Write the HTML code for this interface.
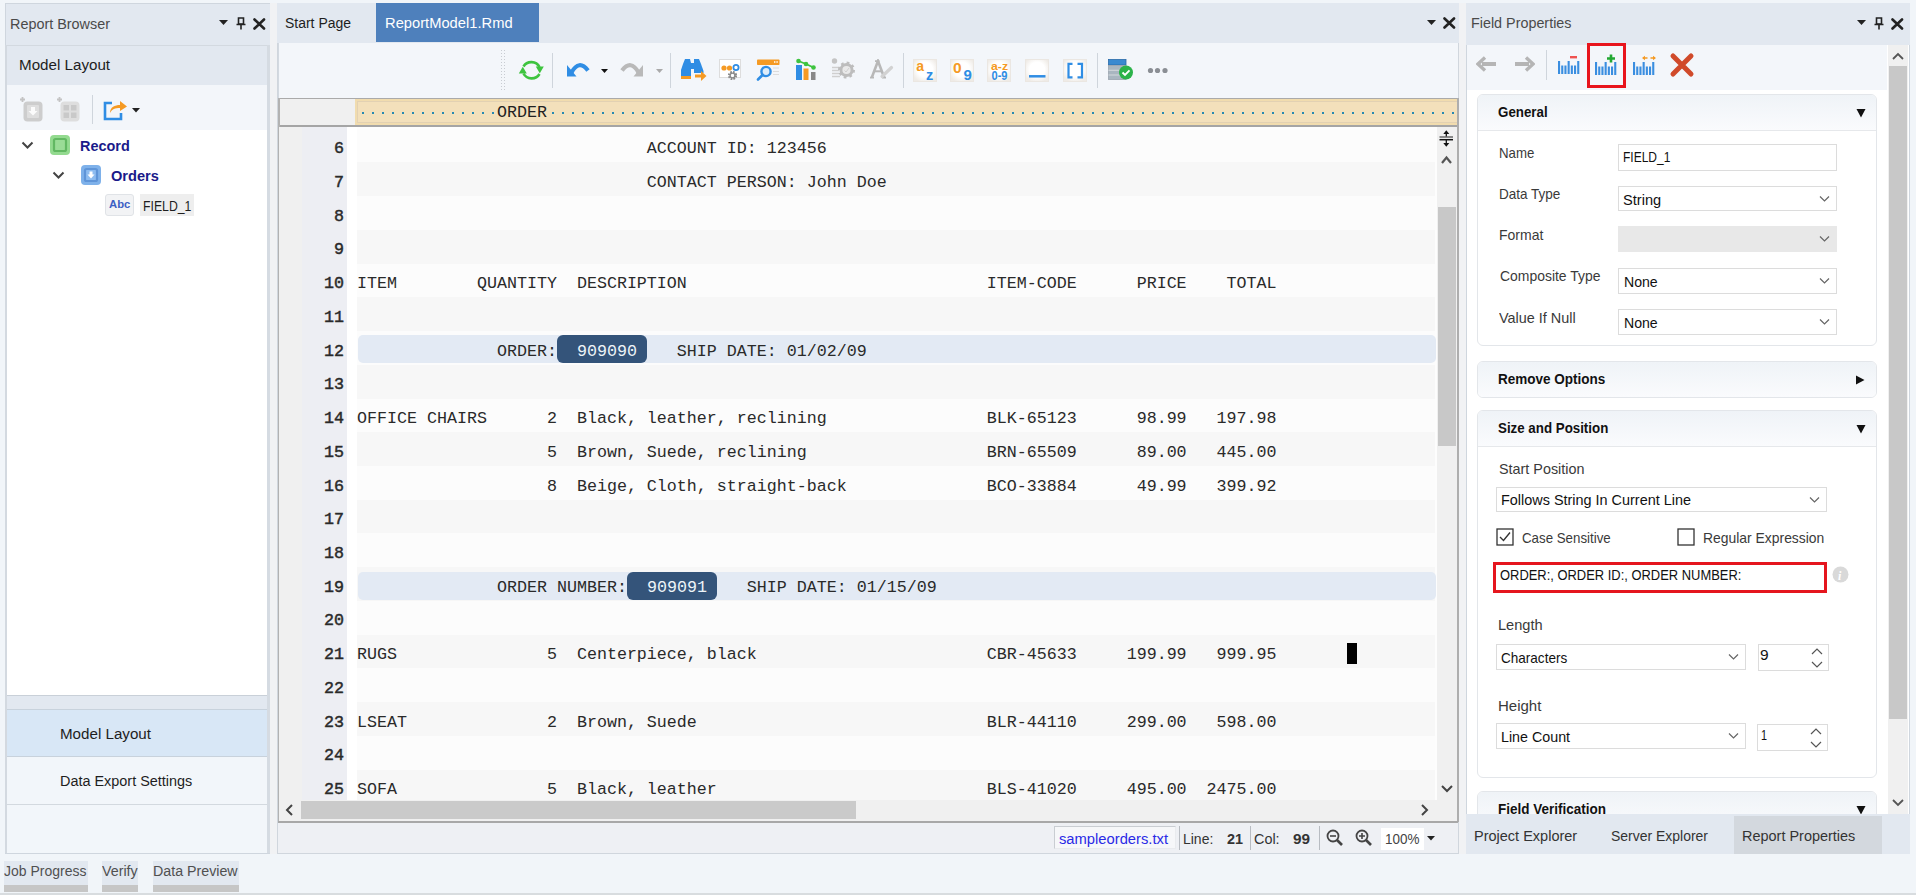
<!DOCTYPE html>
<html><head><meta charset="utf-8"><style>
*{box-sizing:border-box;margin:0;padding:0}
html,body{width:1916px;height:895px;overflow:hidden;background:#f1f5f9;font-family:"Liberation Sans",sans-serif;color:#222}
.a{position:absolute}
.t{position:absolute;white-space:pre;line-height:1}
.m{position:absolute;white-space:pre;line-height:1;font-family:"Liberation Mono",monospace;font-size:16.67px;color:#2a2a2a}
</style></head><body>
<div class="a" style="left:5px;top:3px;width:266px;height:851px;background:#e2e8f0;border:1px solid #cfd6de"></div>
<div class="t" style="left:9.70px;top:16.72px;font-size:14.5px;color:#4a4a4a;transform:scaleX(0.9920);transform-origin:0 0;">Report Browser</div>
<svg class="a" style="left:219px;top:20px;" width="10" height="7" viewBox="0 0 10 7"><path d="M0 0H9L4.5 5Z" fill="#222"/></svg>
<svg class="a" style="left:236px;top:17px;" width="10" height="13" viewBox="0 0 10 13"><path d="M2.5 1H7.5V7H2.5Z" fill="none" stroke="#222" stroke-width="1.6"/><path d="M0.5 7.5H9.5M5 7.5V12.5" stroke="#222" stroke-width="1.6"/></svg>
<svg class="a" style="left:253px;top:18px;" width="13" height="12" viewBox="0 0 13 12"><path d="M1.5 1.5L11 10.5M11 1.5L1.5 10.5" stroke="#222" stroke-width="2.6" stroke-linecap="round"/></svg>
<div class="a" style="left:7px;top:45px;width:262px;height:40px;background:#e2e8f0;border-top:1px solid #d3d9e0"></div>
<div class="t" style="left:18.50px;top:57.38px;font-size:15.5px;color:#1e1e1e;transform:scaleX(0.9788);transform-origin:0 0;">Model Layout</div>
<div class="a" style="left:7px;top:85px;width:260px;height:45px;background:#f3f6fa"></div>
<svg class="a" style="left:19px;top:96px;" width="28" height="28" viewBox="0 0 28 28"><rect x="4.5" y="5.5" width="19" height="20" rx="4" fill="#cdcdcd"/><rect x="8" y="9" width="12" height="13" rx="1" fill="#dedede"/><path d="M12 11V15H9.5L14 19.5L18.5 15H16V11Z" fill="#fbfbfb"/><path d="M3.5 1V6M1 3.5H6" stroke="#c4c4c4" stroke-width="1.8"/></svg>
<svg class="a" style="left:56px;top:96px;" width="28" height="28" viewBox="0 0 28 28"><rect x="4.5" y="5.5" width="19" height="20" rx="4" fill="#dedede"/><rect x="7.5" y="9" width="5.5" height="5.5" fill="#c9c9c9"/><rect x="15" y="9" width="5.5" height="5.5" fill="#c9c9c9"/><rect x="7.5" y="16.5" width="5.5" height="5.5" fill="#c9c9c9"/><rect x="15" y="16.5" width="5.5" height="5.5" fill="#c9c9c9"/><path d="M3.5 1V6M1 3.5H6" stroke="#c4c4c4" stroke-width="1.8"/></svg>
<div class="a" style="left:92px;top:95px;width:1px;height:29px;background:#cfd5dc"></div>
<svg class="a" style="left:102px;top:97px;" width="28" height="26" viewBox="0 0 28 26"><path d="M10 6H3V22H19V16" fill="none" stroke="#2f8de4" stroke-width="2.6"/><path d="M8 16C8 10 13 8 18 8V4L25 9.5L18 14V11C13 11 10 12 8 16Z" fill="#f59a23"/></svg>
<svg class="a" style="left:132px;top:108px;" width="9" height="6" viewBox="0 0 9 6"><path d="M0 0H8L4 4.5Z" fill="#222"/></svg>
<div class="a" style="left:7px;top:130px;width:260px;height:565px;background:#fff"></div>
<svg class="a" style="left:21px;top:141px;" width="13" height="9" viewBox="0 0 13 9"><path d="M1.5 1.5L6.5 6.5L11.5 1.5" fill="none" stroke="#444" stroke-width="2"/></svg>
<svg class="a" style="left:49px;top:134px;" width="22" height="22" viewBox="0 0 22 22"><rect x="1" y="1" width="20" height="20" rx="4" fill="#93da8f"/><rect x="5" y="5" width="12" height="12" rx="1.5" fill="#9adc96" stroke="#62b862" stroke-width="2.2"/></svg>
<div class="t" style="left:80.20px;top:138.48px;font-size:15.5px;font-weight:bold;color:#1a1a8a;transform:scaleX(0.9308);transform-origin:0 0;">Record</div>
<svg class="a" style="left:52px;top:171px;" width="13" height="9" viewBox="0 0 13 9"><path d="M1.5 1.5L6.5 6.5L11.5 1.5" fill="none" stroke="#444" stroke-width="2"/></svg>
<svg class="a" style="left:80px;top:164px;" width="22" height="22" viewBox="0 0 22 22"><rect x="1" y="1" width="20" height="20" rx="4" fill="#7eb1ea"/><rect x="5" y="5" width="12" height="12" rx="1.5" fill="#8dbcf0" stroke="#5f95d8" stroke-width="2.2"/><path d="M9.5 7.5V10.5H7.5L11 14.5L14.5 10.5H12.5V7.5Z" fill="#fff"/></svg>
<div class="t" style="left:111.10px;top:168.38px;font-size:15.5px;font-weight:bold;color:#1a1a8a;transform:scaleX(0.9422);transform-origin:0 0;">Orders</div>
<div class="a" style="left:105px;top:194px;width:29px;height:22px;background:#f2f3f5;border:1px solid #e0e3e7;border-radius:3px"></div>
<div class="t" style="left:108.70px;top:198.86px;font-size:11.5px;font-weight:bold;color:#3d5fc4;transform:scaleX(0.9800);transform-origin:0 0;">Abc</div>
<div class="a" style="left:140px;top:194px;width:54px;height:22px;background:#eeeeee"></div>
<div class="t" style="left:142.60px;top:198.28px;font-size:15.5px;color:#1e1e1e;transform:scaleX(0.7915);transform-origin:0 0;">FIELD_1</div>
<div class="a" style="left:7px;top:695px;width:260px;height:14px;background:#e2e8f0;border-top:1px solid #c9d0d8"></div>
<div class="a" style="left:267px;top:45px;width:3px;height:808px;background:#d5dbe2"></div>
<div class="a" style="left:5px;top:45px;width:2px;height:808px;background:#d3d9e0"></div>
<div class="a" style="left:7px;top:709px;width:260px;height:48px;background:#d8e7f6;border-top:1px solid #c8d2dc;border-bottom:1px solid #c8d2dc"></div>
<div class="t" style="left:59.60px;top:725.78px;font-size:15.5px;color:#1e1e1e;transform:scaleX(0.9777);transform-origin:0 0;">Model Layout</div>
<div class="a" style="left:7px;top:757px;width:260px;height:96px;background:#f2f6fa"></div>
<div class="a" style="left:7px;top:804px;width:260px;height:1px;background:#d3d9df"></div>
<div class="t" style="left:59.60px;top:773.28px;font-size:15.5px;color:#1e1e1e;transform:scaleX(0.9308);transform-origin:0 0;">Data Export Settings</div>
<div class="a" style="left:4px;top:861px;width:84px;height:24px;background:#e2e8f0"></div>
<div class="a" style="left:4px;top:885px;width:84px;height:7px;background:#c6c6c6"></div>
<div class="t" style="left:4.30px;top:863.38px;font-size:15.5px;color:#505050;transform:scaleX(0.9026);transform-origin:0 0;">Job Progress</div>
<div class="a" style="left:102px;top:861px;width:36px;height:24px;background:#e2e8f0"></div>
<div class="a" style="left:102px;top:885px;width:36px;height:7px;background:#c6c6c6"></div>
<div class="t" style="left:102.30px;top:863.38px;font-size:15.5px;color:#505050;transform:scaleX(0.9213);transform-origin:0 0;">Verify</div>
<div class="a" style="left:153px;top:861px;width:86px;height:24px;background:#e2e8f0"></div>
<div class="a" style="left:153px;top:885px;width:86px;height:7px;background:#c6c6c6"></div>
<div class="t" style="left:153.30px;top:863.38px;font-size:15.5px;color:#505050;transform:scaleX(0.9184);transform-origin:0 0;">Data Preview</div>
<div class="a" style="left:0px;top:893px;width:1916px;height:2px;background:#d8dcdf"></div>
<div class="a" style="left:270px;top:3px;width:7px;height:851px;background:#f1f2f4"></div>
<div class="a" style="left:277px;top:3px;width:1182px;height:851px;background:#eef0f4;border:1px solid #d0d6dd"></div>
<div class="a" style="left:277px;top:3px;width:1182px;height:40px;background:#e2e8f0"></div>
<div class="t" style="left:284.80px;top:14.68px;font-size:15.5px;color:#1e1e1e;transform:scaleX(0.9012);transform-origin:0 0;">Start Page</div>
<div class="a" style="left:376px;top:3px;width:163px;height:39px;background:#4e80bc"></div>
<div class="t" style="left:385.30px;top:14.68px;font-size:15.5px;color:#ffffff;transform:scaleX(0.9495);transform-origin:0 0;">ReportModel1.Rmd</div>
<svg class="a" style="left:1427px;top:20px;" width="10" height="7" viewBox="0 0 10 7"><path d="M0 0H9L4.5 5Z" fill="#222"/></svg>
<svg class="a" style="left:1443px;top:17px;" width="13" height="12" viewBox="0 0 13 12"><path d="M1.5 1.5L11 10.5M11 1.5L1.5 10.5" stroke="#222" stroke-width="2.6" stroke-linecap="round"/></svg>
<div class="a" style="left:278px;top:43px;width:1180px;height:55px;background:#f3f6fa;border-left:1px solid #d3d9e0"></div>
<div class="a" style="left:500px;top:49px;width:7px;height:41px;background-image:radial-gradient(circle,#c8ccd2 0.8px,transparent 1px);background-size:3px 3px"></div>
<svg class="a" style="left:517px;top:57px;" width="28" height="26" viewBox="0 0 28 26"><path d="M6.5 9.5A9 8.5 0 0 1 22.5 10" fill="none" stroke="#3ec43f" stroke-width="2.6"/><path d="M18.8 9.5H26.8L22.8 16.2Z" fill="#3ec43f"/><path d="M22.5 17A9 8.5 0 0 1 6.5 16.5" fill="none" stroke="#3ec43f" stroke-width="2.6"/><path d="M1.8 16.5H9.8L5.8 9.8Z" fill="#3ec43f"/></svg>
<div class="a" style="left:552px;top:53px;width:1px;height:35px;background:#cfd5dc"></div>
<svg class="a" style="left:565px;top:59px;" width="26" height="20" viewBox="0 0 26 20"><path d="M2 6L2 17.5H11.5Z" fill="#2f8de4"/><path d="M6.5 13.5Q14 0 23 11.5" fill="none" stroke="#2f8de4" stroke-width="4.2"/></svg>
<svg class="a" style="left:601px;top:69px;" width="8" height="5" viewBox="0 0 8 5"><path d="M0 0H7L3.5 4Z" fill="#111"/></svg>
<svg class="a" style="left:620px;top:59px;" width="26" height="20" viewBox="0 0 26 20"><g transform="translate(25 0) scale(-1 1)"><path d="M2 6L2 17.5H11.5Z" fill="#b9b9b9"/><path d="M6.5 13.5Q14 0 23 11.5" fill="none" stroke="#b9b9b9" stroke-width="4.2"/></g></svg>
<svg class="a" style="left:656px;top:69px;" width="8" height="5" viewBox="0 0 8 5"><path d="M0 0H7L3.5 4Z" fill="#aaa"/></svg>
<div class="a" style="left:670px;top:53px;width:1px;height:35px;background:#cfd5dc"></div>
<svg class="a" style="left:680px;top:57px;" width="28" height="25" viewBox="0 0 28 25"><path d="M5 2H10L11 6V22H1V13L3 7Z" fill="#2f8de4"/><path d="M14 2H19L21 7L23.5 14V16H14Z" fill="#2f8de4"/><rect x="10" y="6" width="5" height="6" fill="#2f8de4"/><rect x="1" y="19" width="10" height="3" fill="#f59a23"/><rect x="15" y="17.5" width="7" height="3" fill="#f59a23"/><path d="M21 14L26.5 19L21 24Z" fill="#f59a23"/></svg>
<svg class="a" style="left:718px;top:57px;" width="26" height="26" viewBox="0 0 26 26"><rect x="1.5" y="2.5" width="21" height="18" fill="#fff" stroke="#ddd"/><circle cx="6" cy="11" r="2.6" fill="#f59a23"/><circle cx="11.5" cy="11" r="2.6" fill="#f59a23"/><circle cx="18" cy="10.5" r="2.6" fill="none" stroke="#2f8de4" stroke-width="1.8"/><circle cx="14.5" cy="18.5" r="3.3" fill="none" stroke="#8a8a8a" stroke-width="2.6" stroke-dasharray="1.6 1"/><circle cx="14.5" cy="18.5" r="2.4" fill="none" stroke="#8a8a8a" stroke-width="1.4"/></svg>
<svg class="a" style="left:755px;top:57px;" width="27" height="26" viewBox="0 0 27 26"><rect x="2" y="2.5" width="22.5" height="5.5" rx="0.8" fill="#f59a23"/><path d="M19 5H23" stroke="#fff" stroke-width="1.3" stroke-dasharray="1 0.6"/><path d="M18 11H24M18 14.5H24M18 17.5H24" stroke="#dcdcdc" stroke-width="1.2"/><circle cx="11" cy="14.5" r="4.6" fill="#dcecfa" stroke="#2f8de4" stroke-width="2.4"/><path d="M7.5 18L3 22.5" stroke="#2f8de4" stroke-width="2.6" stroke-linecap="round"/></svg>
<svg class="a" style="left:794px;top:57px;" width="24" height="25" viewBox="0 0 24 25"><rect x="2" y="8" width="6" height="15" fill="#2f8de4"/><rect x="9.5" y="11.5" width="5" height="11.5" fill="#f59a23"/><rect x="17" y="15" width="4.5" height="8" fill="#888"/><path d="M4.5 4L12 7L19.5 10.5" fill="none" stroke="#3ec43f" stroke-width="1.8"/><circle cx="4.5" cy="4" r="2.3" fill="#3ec43f"/><circle cx="12" cy="7" r="2.3" fill="#3ec43f"/><circle cx="19.5" cy="10.5" r="2.3" fill="#3ec43f"/></svg>
<svg class="a" style="left:830px;top:56px;" width="27" height="25" viewBox="0 0 27 25"><path d="M2 11.5H10M2 14.5H9M2 17.5H9M2 20.5H10" stroke="#cfcfcf" stroke-width="1.7"/><circle cx="16.5" cy="14" r="5.6" fill="#e9e9e9" stroke="#bdbdbd" stroke-width="3"/><circle cx="16.5" cy="14" r="7.4" fill="none" stroke="#bdbdbd" stroke-width="2.2" stroke-dasharray="2.7 3.1"/><path d="M14.5 14.5L16 16L19 12" fill="none" stroke="#cfcfcf" stroke-width="1"/><circle cx="4.5" cy="5" r="2.7" fill="#c4c4c4"/></svg>
<svg class="a" style="left:869px;top:59px;" width="26" height="22" viewBox="0 0 26 22"><path d="M2.8 18.5L9 2L15.2 18.5" fill="none" stroke="#b8b8b8" stroke-width="2.6"/><path d="M5.5 12.3H12.5" stroke="#b8b8b8" stroke-width="2"/><path d="M6 2.2H10.5M1 18.6H5M13 18.6H17" stroke="#b8b8b8" stroke-width="1.8"/><path d="M13 17.5L22.5 8.5" stroke="#d2d2d2" stroke-width="3.2" stroke-linecap="round"/></svg>
<div class="a" style="left:903px;top:53px;width:1px;height:35px;background:#cfd5dc"></div>
<svg class="a" style="left:913px;top:59px;" width="24" height="23" viewBox="0 0 24 23"><defs><radialGradient id="sg1" cx="0.5" cy="0.45" r="0.6"><stop offset="0.55" stop-color="#ffffff"/><stop offset="1" stop-color="#efebe6"/></radialGradient></defs><rect x="0.5" y="0.5" width="23" height="22" fill="url(#sg1)" stroke="#ebe7e2"/><text x="3.2" y="11.5" font-family="Liberation Sans" font-weight="bold" font-size="14" fill="#f59a23">a</text><text x="13" y="20.5" font-family="Liberation Sans" font-weight="bold" font-size="14.5" fill="#2f8de4">z</text></svg>
<svg class="a" style="left:950px;top:59px;" width="24" height="23" viewBox="0 0 24 23"><defs><radialGradient id="sg2" cx="0.5" cy="0.45" r="0.6"><stop offset="0.55" stop-color="#ffffff"/><stop offset="1" stop-color="#efebe6"/></radialGradient></defs><rect x="0.5" y="0.5" width="23" height="22" fill="url(#sg2)" stroke="#ebe7e2"/><text x="3" y="14" font-family="Liberation Sans" font-weight="bold" font-size="15.5" fill="#f59a23">0</text><text x="13.5" y="20.5" font-family="Liberation Sans" font-weight="bold" font-size="15" fill="#2f8de4">9</text></svg>
<svg class="a" style="left:987px;top:59px;" width="24" height="23" viewBox="0 0 24 23"><defs><radialGradient id="sg3" cx="0.5" cy="0.45" r="0.6"><stop offset="0.55" stop-color="#ffffff"/><stop offset="1" stop-color="#efebe6"/></radialGradient></defs><rect x="0.5" y="0.5" width="23" height="22" fill="url(#sg3)" stroke="#ebe7e2"/><text x="4" y="10.5" font-family="Liberation Sans" font-weight="bold" font-size="11" fill="#f59a23" textLength="17" lengthAdjust="spacingAndGlyphs">a-z</text><text x="4.5" y="21" font-family="Liberation Sans" font-weight="bold" font-size="12" fill="#2f8de4" textLength="16" lengthAdjust="spacingAndGlyphs">0-9</text></svg>
<svg class="a" style="left:1025px;top:59px;" width="24" height="23" viewBox="0 0 24 23"><defs><radialGradient id="sg4" cx="0.5" cy="0.45" r="0.6"><stop offset="0.55" stop-color="#ffffff"/><stop offset="1" stop-color="#efebe6"/></radialGradient></defs><rect x="0.5" y="0.5" width="23" height="22" fill="url(#sg4)" stroke="#ebe7e2"/><path d="M4 17.3H20.5" stroke="#2f8de4" stroke-width="2.5"/></svg>
<svg class="a" style="left:1063px;top:59px;" width="24" height="23" viewBox="0 0 24 23"><defs><radialGradient id="sg5" cx="0.5" cy="0.45" r="0.6"><stop offset="0.55" stop-color="#ffffff"/><stop offset="1" stop-color="#efebe6"/></radialGradient></defs><rect x="0.5" y="0.5" width="23" height="22" fill="url(#sg5)" stroke="#ebe7e2"/><path d="M9.5 4.8H5.5V18.3H9.5M14.5 4.8H19V18.3H14.5" fill="none" stroke="#2f8de4" stroke-width="2.2"/></svg>
<div class="a" style="left:1097px;top:53px;width:1px;height:35px;background:#cfd5dc"></div>
<svg class="a" style="left:1107px;top:58px;" width="28" height="24" viewBox="0 0 28 24"><rect x="1.5" y="1.5" width="17.5" height="5.5" fill="#3a8ad0" stroke="#2a6aa8" stroke-width="0.8"/><rect x="1.5" y="7.5" width="17.5" height="14" fill="#a9b6c0" stroke="#9aa4ad" stroke-width="0.8"/><path d="M1.5 12.3H19M1.5 17H19" stroke="#d4d9dd" stroke-width="1"/><circle cx="19" cy="14.5" r="7" fill="#2cb34a"/><path d="M15.5 14.5L18 17L22.5 12.3" fill="none" stroke="#fff" stroke-width="1.9"/></svg>
<svg class="a" style="left:1146px;top:66px;" width="24" height="9" viewBox="0 0 24 9"><circle cx="4.5" cy="4.5" r="2.6" fill="#8a8e94"/><circle cx="11.5" cy="4.5" r="2.6" fill="#8a8e94"/><circle cx="19" cy="4.5" r="2.6" fill="#8a8e94"/></svg>
<div class="a" style="left:278px;top:98px;width:1180px;height:29px;background:#f0f0f0;border-top:1px solid #aaa;border-bottom:2px solid #a5a5a5"></div>
<div class="a" style="left:355px;top:99px;width:1102px;height:26px;background:#f1dcae"></div>
<div class="a" style="left:357px;top:101px;width:1100px;height:22px;background:#f3e0bb;border:1px solid #e2d1b3;border-right:none"></div>
<div class="a" style="left:362px;top:111.5px;width:1094px;height:2.5px;background-image:linear-gradient(90deg,#2589b3 0,#2589b3 2.5px,transparent 2.5px);background-size:10px 100%"></div>
<div class="a" style="left:495px;top:103px;width:56px;height:19px;background:#f3e0bb"></div>
<div class="m" style="left:497px;top:105px;font-size:16.67px;color:#222">ORDER</div>
<div class="a" style="left:279px;top:127px;width:1158px;height:673px;background:#fdfdfd"></div>
<div class="a" style="left:278px;top:98px;width:2px;height:724px;background:#b2b2b2"></div>
<div class="a" style="left:1457px;top:98px;width:2px;height:724px;background:#aeaeae"></div>
<div class="a" style="left:279px;top:127px;width:23px;height:673px;background:#f0f0f0"></div>
<div class="a" style="left:302px;top:127px;width:45px;height:673px;background:#edeef3"></div>
<div class="a" style="left:347px;top:127px;width:10px;height:673px;background:#ffffff"></div>
<div class="a" style="left:279px;top:127px;width:1158px;height:673px;overflow:hidden">
<div class="a" style="left:78px;top:1.60px;width:1078px;height:33.74px;background:#fcfcfc"></div>
<div class="m" style="left:55px;top:14.10px;color:#2a2a2a;-webkit-text-stroke:0.45px #2a2a2a">6</div>
<div class="m" style="left:78px;top:14.10px">                             ACCOUNT ID: 123456</div>
<div class="a" style="left:78px;top:35.34px;width:1078px;height:33.74px;background:#f7f7f7"></div>
<div class="m" style="left:55px;top:47.84px;color:#2a2a2a;-webkit-text-stroke:0.45px #2a2a2a">7</div>
<div class="m" style="left:78px;top:47.84px">                             CONTACT PERSON: John Doe</div>
<div class="a" style="left:78px;top:69.08px;width:1078px;height:33.74px;background:#fcfcfc"></div>
<div class="m" style="left:55px;top:81.58px;color:#2a2a2a;-webkit-text-stroke:0.45px #2a2a2a">8</div>
<div class="a" style="left:78px;top:102.82px;width:1078px;height:33.74px;background:#f7f7f7"></div>
<div class="m" style="left:55px;top:115.32px;color:#2a2a2a;-webkit-text-stroke:0.45px #2a2a2a">9</div>
<div class="a" style="left:78px;top:136.56px;width:1078px;height:33.74px;background:#fcfcfc"></div>
<div class="m" style="left:45px;top:149.06px;color:#2a2a2a;-webkit-text-stroke:0.45px #2a2a2a">10</div>
<div class="m" style="left:78px;top:149.06px">ITEM        QUANTITY  DESCRIPTION                              ITEM-CODE      PRICE    TOTAL</div>
<div class="a" style="left:78px;top:170.30px;width:1078px;height:33.74px;background:#f7f7f7"></div>
<div class="m" style="left:45px;top:182.80px;color:#2a2a2a;-webkit-text-stroke:0.45px #2a2a2a">11</div>
<div class="a" style="left:78px;top:204.04px;width:1078px;height:33.74px;background:#fcfcfc"></div>
<div class="a" style="left:79px;top:208.44px;width:1078px;height:28px;background:#e3eaf4;border-radius:5px"></div>
<div class="a" style="left:278px;top:208.44px;width:90px;height:28px;background:#34547a;border-radius:6px"></div>
<div class="m" style="left:298px;top:216.54px;color:#eef3f8">909090</div>
<div class="m" style="left:45px;top:216.54px;color:#2a2a2a;-webkit-text-stroke:0.45px #2a2a2a">12</div>
<div class="m" style="left:78px;top:216.54px">              ORDER:            SHIP DATE: 01/02/09</div>
<div class="a" style="left:78px;top:237.78px;width:1078px;height:33.74px;background:#f7f7f7"></div>
<div class="m" style="left:45px;top:250.28px;color:#2a2a2a;-webkit-text-stroke:0.45px #2a2a2a">13</div>
<div class="a" style="left:78px;top:271.52px;width:1078px;height:33.74px;background:#fcfcfc"></div>
<div class="m" style="left:45px;top:284.02px;color:#2a2a2a;-webkit-text-stroke:0.45px #2a2a2a">14</div>
<div class="m" style="left:78px;top:284.02px">OFFICE CHAIRS      2  Black, leather, reclining                BLK-65123      98.99   197.98</div>
<div class="a" style="left:78px;top:305.26px;width:1078px;height:33.74px;background:#f7f7f7"></div>
<div class="m" style="left:45px;top:317.76px;color:#2a2a2a;-webkit-text-stroke:0.45px #2a2a2a">15</div>
<div class="m" style="left:78px;top:317.76px">                   5  Brown, Suede, reclining                  BRN-65509      89.00   445.00</div>
<div class="a" style="left:78px;top:339.00px;width:1078px;height:33.74px;background:#fcfcfc"></div>
<div class="m" style="left:45px;top:351.50px;color:#2a2a2a;-webkit-text-stroke:0.45px #2a2a2a">16</div>
<div class="m" style="left:78px;top:351.50px">                   8  Beige, Cloth, straight-back              BCO-33884      49.99   399.92</div>
<div class="a" style="left:78px;top:372.74px;width:1078px;height:33.74px;background:#f7f7f7"></div>
<div class="m" style="left:45px;top:385.24px;color:#2a2a2a;-webkit-text-stroke:0.45px #2a2a2a">17</div>
<div class="a" style="left:78px;top:406.48px;width:1078px;height:33.74px;background:#fcfcfc"></div>
<div class="m" style="left:45px;top:418.98px;color:#2a2a2a;-webkit-text-stroke:0.45px #2a2a2a">18</div>
<div class="a" style="left:78px;top:440.22px;width:1078px;height:33.74px;background:#f7f7f7"></div>
<div class="a" style="left:79px;top:444.62px;width:1078px;height:28px;background:#e3eaf4;border-radius:5px"></div>
<div class="a" style="left:348px;top:444.62px;width:90px;height:28px;background:#34547a;border-radius:6px"></div>
<div class="m" style="left:368px;top:452.72px;color:#eef3f8">909091</div>
<div class="m" style="left:45px;top:452.72px;color:#2a2a2a;-webkit-text-stroke:0.45px #2a2a2a">19</div>
<div class="m" style="left:78px;top:452.72px">              ORDER NUMBER:            SHIP DATE: 01/15/09</div>
<div class="a" style="left:78px;top:473.96px;width:1078px;height:33.74px;background:#fcfcfc"></div>
<div class="m" style="left:45px;top:486.46px;color:#2a2a2a;-webkit-text-stroke:0.45px #2a2a2a">20</div>
<div class="a" style="left:78px;top:507.70px;width:1078px;height:33.74px;background:#f7f7f7"></div>
<div class="m" style="left:45px;top:520.20px;color:#2a2a2a;-webkit-text-stroke:0.45px #2a2a2a">21</div>
<div class="m" style="left:78px;top:520.20px">RUGS               5  Centerpiece, black                       CBR-45633     199.99   999.95</div>
<div class="a" style="left:78px;top:541.44px;width:1078px;height:33.74px;background:#fcfcfc"></div>
<div class="m" style="left:45px;top:553.94px;color:#2a2a2a;-webkit-text-stroke:0.45px #2a2a2a">22</div>
<div class="a" style="left:78px;top:575.18px;width:1078px;height:33.74px;background:#f7f7f7"></div>
<div class="m" style="left:45px;top:587.68px;color:#2a2a2a;-webkit-text-stroke:0.45px #2a2a2a">23</div>
<div class="m" style="left:78px;top:587.68px">LSEAT              2  Brown, Suede                             BLR-44110     299.00   598.00</div>
<div class="a" style="left:78px;top:608.92px;width:1078px;height:33.74px;background:#fcfcfc"></div>
<div class="m" style="left:45px;top:621.42px;color:#2a2a2a;-webkit-text-stroke:0.45px #2a2a2a">24</div>
<div class="a" style="left:78px;top:642.66px;width:1078px;height:33.74px;background:#f7f7f7"></div>
<div class="m" style="left:45px;top:655.16px;color:#2a2a2a;-webkit-text-stroke:0.45px #2a2a2a">25</div>
<div class="m" style="left:78px;top:655.16px">SOFA               5  Black, leather                           BLS-41020     495.00  2475.00</div>
<div class="a" style="left:1068px;top:515.70px;width:10px;height:21px;background:#000"></div>
</div>
<div class="a" style="left:1437px;top:127px;width:20px;height:673px;background:#f0f0f0"></div>
<svg class="a" style="left:1438px;top:129px;" width="18" height="20" viewBox="0 0 18 20"><path d="M8.3 1.2L5.3 5H11.3Z" fill="#111"/><path d="M8.3 4V8M8.3 10.5V15" stroke="#111" stroke-width="1.3"/><path d="M1.5 8H15" stroke="#666" stroke-width="1.5"/><path d="M1.5 10.7H15" stroke="#111" stroke-width="1.5"/><path d="M5.3 14H11.3L8.3 17.8Z" fill="#111"/></svg>
<svg class="a" style="left:1439px;top:153px;" width="15" height="13" viewBox="0 0 15 13"><path d="M3 10L7.5 4.5L12 10" fill="none" stroke="#555" stroke-width="2.2"/></svg>
<div class="a" style="left:1438px;top:207px;width:18px;height:239px;background:#c8c8c8"></div>
<svg class="a" style="left:1440px;top:784px;" width="14" height="10" viewBox="0 0 14 10"><path d="M2 2L7 7L12 2" fill="none" stroke="#444" stroke-width="2"/></svg>
<div class="a" style="left:279px;top:800px;width:1178px;height:21px;background:#f0f0f0"></div>
<div class="a" style="left:301px;top:801px;width:555px;height:18px;background:#cacaca"></div>
<svg class="a" style="left:283px;top:803px;" width="12" height="14" viewBox="0 0 12 14"><path d="M9 2L4 7L9 12" fill="none" stroke="#444" stroke-width="2"/></svg>
<svg class="a" style="left:1419px;top:803px;" width="12" height="14" viewBox="0 0 12 14"><path d="M3 2L8 7L3 12" fill="none" stroke="#444" stroke-width="2"/></svg>
<div class="a" style="left:278px;top:821px;width:1180px;height:2px;background:#a8a8a8"></div>
<div class="a" style="left:278px;top:823px;width:1180px;height:30px;background:#eef0f4"></div>
<div class="a" style="left:1054px;top:826px;width:122px;height:23px;background:#f6f7f9;border:1px solid #c9cdd2;border-right-color:#e9ebee;border-bottom-color:#e9ebee"></div>
<div class="t" style="left:1059.00px;top:830.78px;font-size:15.5px;color:#2a2ae6;transform:scaleX(0.9516);transform-origin:0 0;">sampleorders.txt</div>
<div class="a" style="left:1179px;top:826px;width:1px;height:24px;background:#b8bcc2"></div>
<div class="t" style="left:1182.50px;top:830.78px;font-size:15.5px;color:#333;transform:scaleX(0.9008);transform-origin:0 0;">Line:</div>
<div class="t" style="left:1227.00px;top:830.78px;font-size:15.5px;font-weight:bold;color:#333;transform:scaleX(0.9300);transform-origin:0 0;">21</div>
<div class="a" style="left:1250px;top:826px;width:1px;height:24px;background:#b8bcc2"></div>
<div class="t" style="left:1254.00px;top:830.78px;font-size:15.5px;color:#333;transform:scaleX(0.9279);transform-origin:0 0;">Col:</div>
<div class="t" style="left:1293.00px;top:830.78px;font-size:15.5px;font-weight:bold;color:#333;transform:scaleX(0.9881);transform-origin:0 0;">99</div>
<div class="a" style="left:1319px;top:826px;width:1px;height:24px;background:#b8bcc2"></div>
<svg class="a" style="left:1325px;top:828px;" width="20" height="20" viewBox="0 0 20 20"><circle cx="8" cy="8" r="5.5" fill="none" stroke="#444" stroke-width="1.8"/><path d="M5 8H11" stroke="#444" stroke-width="1.6"/><path d="M12 12L17 17" stroke="#444" stroke-width="2.6"/></svg>
<svg class="a" style="left:1354px;top:828px;" width="20" height="20" viewBox="0 0 20 20"><circle cx="8" cy="8" r="5.5" fill="none" stroke="#444" stroke-width="1.8"/><path d="M5 8H11M8 5V11" stroke="#444" stroke-width="1.6"/><path d="M12 12L17 17" stroke="#444" stroke-width="2.6"/></svg>
<div class="a" style="left:1381px;top:828px;width:43px;height:22px;background:#fff"></div>
<div class="t" style="left:1384.50px;top:830.78px;font-size:15.5px;color:#444;transform:scaleX(0.8695);transform-origin:0 0;">100%</div>
<svg class="a" style="left:1427px;top:836px;" width="9" height="6" viewBox="0 0 9 6"><path d="M0 0H8L4 4.5Z" fill="#222"/></svg>
<div class="a" style="left:1459px;top:3px;width:7px;height:851px;background:#f1f2f4"></div>
<div class="a" style="left:1466px;top:3px;width:444px;height:851px;background:#fff;border:1px solid #cfd6de"></div>
<div class="a" style="left:1466px;top:3px;width:444px;height:42px;background:#e2e8f0"></div>
<div class="t" style="left:1471.30px;top:16.02px;font-size:14.5px;color:#4a4a4a;transform:scaleX(0.9894);transform-origin:0 0;">Field Properties</div>
<svg class="a" style="left:1857px;top:20px;" width="10" height="7" viewBox="0 0 10 7"><path d="M0 0H9L4.5 5Z" fill="#222"/></svg>
<svg class="a" style="left:1874px;top:17px;" width="10" height="13" viewBox="0 0 10 13"><path d="M2.5 1H7.5V7H2.5Z" fill="none" stroke="#222" stroke-width="1.6"/><path d="M0.5 7.5H9.5M5 7.5V12.5" stroke="#222" stroke-width="1.6"/></svg>
<svg class="a" style="left:1891px;top:18px;" width="13" height="12" viewBox="0 0 13 12"><path d="M1.5 1.5L11 10.5M11 1.5L1.5 10.5" stroke="#222" stroke-width="2.6" stroke-linecap="round"/></svg>
<div class="a" style="left:1467px;top:45px;width:420px;height:45px;background:#f3f6fa"></div>
<svg class="a" style="left:1476px;top:56px;" width="22" height="16" viewBox="0 0 22 16"><path d="M20 8H6" stroke="#b5b5b5" stroke-width="4"/><path d="M9 1.5L2 8L9 14.5" fill="none" stroke="#b5b5b5" stroke-width="3.4"/></svg>
<svg class="a" style="left:1513px;top:56px;" width="22" height="16" viewBox="0 0 22 16"><path d="M2 8H16" stroke="#b5b5b5" stroke-width="4"/><path d="M13 1.5L20 8L13 14.5" fill="none" stroke="#b5b5b5" stroke-width="3.4"/></svg>
<div class="a" style="left:1546px;top:50px;width:1px;height:30px;background:#cfd5dc"></div>
<svg class="a" style="left:1558px;top:60px;" width="23" height="14" viewBox="0 0 23 14"><rect x="0.0" y="1" width="2.1" height="13" fill="#3a8ee0"/><rect x="3.2" y="5.5" width="2.1" height="8.5" fill="#3a8ee0"/><rect x="6.4" y="5.5" width="2.1" height="8.5" fill="#3a8ee0"/><rect x="9.6" y="1" width="2.1" height="13" fill="#3a8ee0"/><rect x="12.8" y="5.5" width="2.1" height="8.5" fill="#3a8ee0"/><rect x="16.0" y="5.5" width="2.1" height="8.5" fill="#3a8ee0"/><rect x="19.2" y="1" width="2.1" height="13" fill="#3a8ee0"/></svg>
<svg class="a" style="left:1570px;top:55px;" width="9" height="4" viewBox="0 0 9 4"><rect x="0" y="1" width="7" height="2.4" fill="#ef5350"/></svg>
<div class="a" style="left:1587px;top:43px;width:39px;height:45px;border:3px solid #e8141c"></div>
<svg class="a" style="left:1595px;top:61px;" width="23" height="14" viewBox="0 0 23 14"><rect x="0.0" y="1" width="2.1" height="13" fill="#3a8ee0"/><rect x="3.2" y="5.5" width="2.1" height="8.5" fill="#3a8ee0"/><rect x="6.4" y="5.5" width="2.1" height="8.5" fill="#3a8ee0"/><rect x="9.6" y="1" width="2.1" height="13" fill="#3a8ee0"/><rect x="12.8" y="5.5" width="2.1" height="8.5" fill="#3a8ee0"/><rect x="16.0" y="5.5" width="2.1" height="8.5" fill="#3a8ee0"/><rect x="19.2" y="1" width="2.1" height="13" fill="#3a8ee0"/></svg>
<svg class="a" style="left:1606px;top:54px;" width="11" height="10" viewBox="0 0 11 10"><path d="M5 0.5V8.5M1 4.5H9" stroke="#22a832" stroke-width="2.6"/></svg>
<svg class="a" style="left:1633px;top:61px;" width="23" height="14" viewBox="0 0 23 14"><rect x="0.0" y="1" width="2.1" height="13" fill="#3a8ee0"/><rect x="3.2" y="5.5" width="2.1" height="8.5" fill="#3a8ee0"/><rect x="6.4" y="5.5" width="2.1" height="8.5" fill="#3a8ee0"/><rect x="9.6" y="1" width="2.1" height="13" fill="#3a8ee0"/><rect x="12.8" y="5.5" width="2.1" height="8.5" fill="#3a8ee0"/><rect x="16.0" y="5.5" width="2.1" height="8.5" fill="#3a8ee0"/><rect x="19.2" y="1" width="2.1" height="13" fill="#3a8ee0"/></svg>
<svg class="a" style="left:1641px;top:55px;" width="16" height="6" viewBox="0 0 16 6"><path d="M2 3H6.5M9.5 3H14" stroke="#f59a23" stroke-width="1.6"/><path d="M1 3L4 0.8V5.2Z M15 3L12 0.8V5.2Z" fill="#f59a23"/></svg>
<svg class="a" style="left:1669px;top:52px;" width="26" height="26" viewBox="0 0 26 26"><path d="M4 4L22 22M22 4L4 22" stroke="#d04a2a" stroke-width="5" stroke-linecap="round"/></svg>
<div class="a" style="left:1888px;top:45px;width:20px;height:769px;background:#f0f0f0"></div>
<svg class="a" style="left:1890px;top:50px;" width="16" height="12" viewBox="0 0 16 12"><path d="M3 9L8 4L13 9" fill="none" stroke="#555" stroke-width="1.8"/></svg>
<div class="a" style="left:1889px;top:66px;width:18px;height:653px;background:#c8c8c8"></div>
<svg class="a" style="left:1890px;top:797px;" width="16" height="12" viewBox="0 0 16 12"><path d="M3 3L8 8L13 3" fill="none" stroke="#555" stroke-width="1.8"/></svg>
<div class="a" style="left:1477px;top:94px;width:400px;height:252px;background:#fff;border:1px solid #e3e6ea;border-radius:6px"></div>
<div class="a" style="left:1478px;top:95px;width:398px;height:36px;background:linear-gradient(#eff3f7,#fafbfd);border-radius:5px 5px 0 0;border-bottom:1px solid #e6e8eb;"></div>
<div class="t" style="left:1498.30px;top:105.42px;font-size:14.5px;font-weight:bold;color:#111;transform:scaleX(0.9202);transform-origin:0 0;">General</div>
<svg class="a" style="left:1856px;top:108px;" width="10" height="10" viewBox="0 0 10 10"><path d="M0.5 1H9.5L5 9.5Z" fill="#111"/></svg>
<div class="t" style="left:1498.70px;top:146.02px;font-size:14.5px;color:#3a3a3a;transform:scaleX(0.9118);transform-origin:0 0;">Name</div>
<div class="a" style="left:1618px;top:144px;width:219px;height:27px;background:#fff;border:1px solid #dcdcdc"></div>
<div class="t" style="left:1622.60px;top:149.30px;font-size:15px;color:#111;transform:scaleX(0.8010);transform-origin:0 0;">FIELD_1</div>
<div class="t" style="left:1498.70px;top:187.32px;font-size:14.5px;color:#3a3a3a;transform:scaleX(0.9312);transform-origin:0 0;">Data Type</div>
<div class="a" style="left:1618px;top:186px;width:219px;height:25px;background:#fff;border:1px solid #dcdcdc"></div>
<svg class="a" style="left:1819px;top:195px;" width="12" height="8" viewBox="0 0 12 8"><path d="M1 1.5L5.5 6L10 1.5" fill="none" stroke="#666" stroke-width="1.2"/></svg>
<div class="t" style="left:1623.30px;top:191.50px;font-size:15px;color:#111;transform:scaleX(0.9732);transform-origin:0 0;">String</div>
<div class="t" style="left:1498.70px;top:227.82px;font-size:14.5px;color:#3a3a3a;transform:scaleX(0.9653);transform-origin:0 0;">Format</div>
<div class="a" style="left:1618px;top:226px;width:219px;height:26px;background:#e8e8e8;border:1px solid #e8e8e8"></div>
<svg class="a" style="left:1819px;top:235px;" width="12" height="8" viewBox="0 0 12 8"><path d="M1 1.5L5.5 6L10 1.5" fill="none" stroke="#666" stroke-width="1.2"/></svg>
<div class="t" style="left:1500.00px;top:269.42px;font-size:14.5px;color:#3a3a3a;transform:scaleX(0.9613);transform-origin:0 0;">Composite Type</div>
<div class="a" style="left:1618px;top:268px;width:219px;height:26px;background:#fff;border:1px solid #dcdcdc"></div>
<svg class="a" style="left:1819px;top:277px;" width="12" height="8" viewBox="0 0 12 8"><path d="M1 1.5L5.5 6L10 1.5" fill="none" stroke="#666" stroke-width="1.2"/></svg>
<div class="t" style="left:1623.60px;top:273.90px;font-size:15px;color:#111;transform:scaleX(0.9400);transform-origin:0 0;">None</div>
<div class="t" style="left:1498.70px;top:310.72px;font-size:14.5px;color:#3a3a3a;transform:scaleX(0.9943);transform-origin:0 0;">Value If Null</div>
<div class="a" style="left:1618px;top:309px;width:219px;height:26px;background:#fff;border:1px solid #dcdcdc"></div>
<svg class="a" style="left:1819px;top:318px;" width="12" height="8" viewBox="0 0 12 8"><path d="M1 1.5L5.5 6L10 1.5" fill="none" stroke="#666" stroke-width="1.2"/></svg>
<div class="t" style="left:1623.60px;top:315.20px;font-size:15px;color:#111;transform:scaleX(0.9400);transform-origin:0 0;">None</div>
<div class="a" style="left:1477px;top:361px;width:400px;height:37px;background:#fff;border:1px solid #e3e6ea;border-radius:6px"></div>
<div class="a" style="left:1478px;top:362px;width:398px;height:35px;background:linear-gradient(#eff3f7,#fafbfd);border-radius:5px 5px 0 0;border-radius:5px;"></div>
<div class="t" style="left:1498.30px;top:372.42px;font-size:14.5px;font-weight:bold;color:#111;transform:scaleX(0.9314);transform-origin:0 0;">Remove Options</div>
<svg class="a" style="left:1855px;top:375px;" width="10" height="10" viewBox="0 0 10 10"><path d="M1 0.5L9.5 5L1 9.5Z" fill="#111"/></svg>
<div class="a" style="left:1477px;top:410px;width:400px;height:368px;background:#fff;border:1px solid #e3e6ea;border-radius:6px"></div>
<div class="a" style="left:1478px;top:411px;width:398px;height:36px;background:linear-gradient(#eff3f7,#fafbfd);border-radius:5px 5px 0 0;border-bottom:1px solid #e6e8eb;"></div>
<div class="t" style="left:1498.30px;top:421.42px;font-size:14.5px;font-weight:bold;color:#111;transform:scaleX(0.9187);transform-origin:0 0;">Size and Position</div>
<svg class="a" style="left:1856px;top:424px;" width="10" height="10" viewBox="0 0 10 10"><path d="M0.5 1H9.5L5 9.5Z" fill="#111"/></svg>
<div class="t" style="left:1498.60px;top:461.92px;font-size:14.5px;color:#3a3a3a;transform:scaleX(0.9907);transform-origin:0 0;">Start Position</div>
<div class="a" style="left:1496px;top:487px;width:331px;height:25px;background:#fff;border:1px solid #dcdcdc"></div>
<svg class="a" style="left:1809px;top:496px;" width="12" height="8" viewBox="0 0 12 8"><path d="M1 1.5L5.5 6L10 1.5" fill="none" stroke="#666" stroke-width="1.2"/></svg>
<div class="t" style="left:1501.00px;top:492.20px;font-size:15px;color:#111;transform:scaleX(0.9614);transform-origin:0 0;">Follows String In Current Line</div>
<svg class="a" style="left:1496px;top:528px;" width="18" height="18" viewBox="0 0 18 18"><rect x="1" y="1" width="16" height="16" fill="#fff" stroke="#333" stroke-width="1.3"/><path d="M4 9L7.5 12.5L14 4.5" fill="none" stroke="#333" stroke-width="1.4"/></svg>
<div class="t" style="left:1521.60px;top:530.52px;font-size:14.5px;color:#3a3a3a;transform:scaleX(0.9171);transform-origin:0 0;">Case Sensitive</div>
<svg class="a" style="left:1677px;top:528px;" width="18" height="18" viewBox="0 0 18 18"><rect x="1" y="1" width="16" height="16" fill="#fff" stroke="#333" stroke-width="1.3"/></svg>
<div class="t" style="left:1702.60px;top:530.52px;font-size:14.5px;color:#3a3a3a;transform:scaleX(0.9588);transform-origin:0 0;">Regular Expression</div>
<div class="a" style="left:1493px;top:562px;width:334px;height:31px;border:3px solid #e5161e;background:#fff"></div>
<div class="t" style="left:1500.00px;top:568.22px;font-size:14.5px;color:#111;transform:scaleX(0.8917);transform-origin:0 0;">ORDER:, ORDER ID:, ORDER NUMBER:</div>
<svg class="a" style="left:1832px;top:566px;" width="17" height="17" viewBox="0 0 17 17"><circle cx="8.5" cy="8.5" r="8" fill="#d9d9d9"/><text x="6" y="14" font-family="Liberation Serif" font-style="italic" font-weight="bold" font-size="12" fill="#fff">i</text></svg>
<div class="t" style="left:1498.20px;top:618.12px;font-size:14.5px;color:#3a3a3a;transform:scaleX(1.0074);transform-origin:0 0;">Length</div>
<div class="a" style="left:1496px;top:644px;width:250px;height:26px;background:#fff;border:1px solid #dcdcdc"></div>
<svg class="a" style="left:1728px;top:653px;" width="12" height="8" viewBox="0 0 12 8"><path d="M1 1.5L5.5 6L10 1.5" fill="none" stroke="#666" stroke-width="1.2"/></svg>
<div class="t" style="left:1501.30px;top:649.90px;font-size:15px;color:#111;transform:scaleX(0.9025);transform-origin:0 0;">Characters</div>
<div class="a" style="left:1758px;top:644px;width:71px;height:27px;background:#fff;border:1px solid #dcdcdc"></div>
<div class="t" style="left:1760.40px;top:647.72px;font-size:14.5px;color:#111;transform:scaleX(1.0687);transform-origin:0 0;">9</div>
<svg class="a" style="left:1810px;top:647px;" width="14" height="22" viewBox="0 0 14 22"><path d="M2 7L7 2L12 7M2 15L7 20L12 15" fill="none" stroke="#555" stroke-width="1.2"/></svg>
<div class="t" style="left:1498.20px;top:698.72px;font-size:14.5px;color:#3a3a3a;transform:scaleX(1.0333);transform-origin:0 0;">Height</div>
<div class="a" style="left:1496px;top:723px;width:250px;height:26px;background:#fff;border:1px solid #dcdcdc"></div>
<svg class="a" style="left:1728px;top:732px;" width="12" height="8" viewBox="0 0 12 8"><path d="M1 1.5L5.5 6L10 1.5" fill="none" stroke="#666" stroke-width="1.2"/></svg>
<div class="t" style="left:1501.30px;top:728.80px;font-size:15px;color:#111;transform:scaleX(0.9514);transform-origin:0 0;">Line Count</div>
<div class="a" style="left:1757px;top:724px;width:71px;height:27px;background:#fff;border:1px solid #dcdcdc"></div>
<div class="t" style="left:1761.00px;top:728.22px;font-size:14.5px;color:#111;transform:scaleX(0.7456);transform-origin:0 0;">1</div>
<svg class="a" style="left:1809px;top:727px;" width="14" height="22" viewBox="0 0 14 22"><path d="M2 7L7 2L12 7M2 15L7 20L12 15" fill="none" stroke="#555" stroke-width="1.2"/></svg>
<div class="a" style="left:1477px;top:791px;width:400px;height:59px;background:#fff;border:1px solid #e3e6ea;border-radius:6px"></div>
<div class="a" style="left:1478px;top:792px;width:398px;height:36px;background:linear-gradient(#eff3f7,#fafbfd);border-radius:5px 5px 0 0;border-bottom:1px solid #e6e8eb;"></div>
<div class="t" style="left:1498.30px;top:802.42px;font-size:14.5px;font-weight:bold;color:#111;transform:scaleX(0.9310);transform-origin:0 0;">Field Verification</div>
<svg class="a" style="left:1856px;top:805px;" width="10" height="10" viewBox="0 0 10 10"><path d="M0.5 1H9.5L5 9.5Z" fill="#111"/></svg>
<div class="a" style="left:1466px;top:814px;width:444px;height:40px;background:#e2e8f0"></div>
<div class="a" style="left:1734px;top:816px;width:148px;height:38px;background:#d3d8de"></div>
<div class="t" style="left:1473.60px;top:827.88px;font-size:15.5px;color:#333;transform:scaleX(0.9358);transform-origin:0 0;">Project Explorer</div>
<div class="t" style="left:1610.80px;top:827.88px;font-size:15.5px;color:#333;transform:scaleX(0.9011);transform-origin:0 0;">Server Explorer</div>
<div class="t" style="left:1742.00px;top:827.88px;font-size:15.5px;color:#333;transform:scaleX(0.9330);transform-origin:0 0;">Report Properties</div>
</body></html>
